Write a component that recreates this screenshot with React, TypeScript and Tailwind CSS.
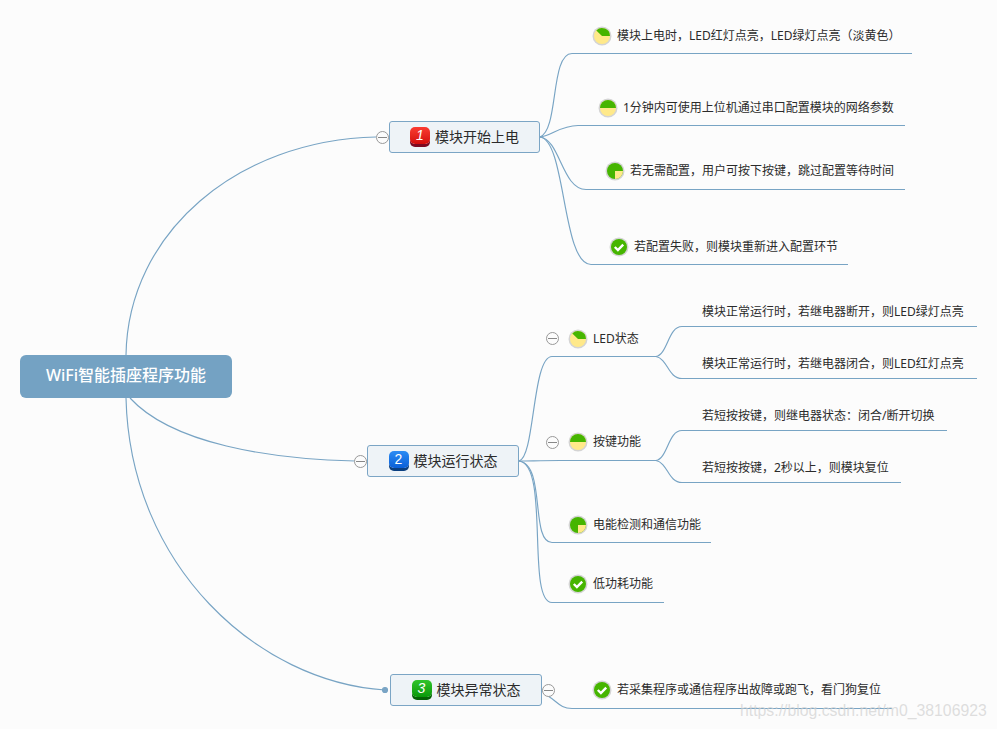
const font = "[font-family:'Noto_Sans','Noto_Sans_CJK_SC','Liberation_Sans',sans-serif]";

// connector lines of the map, drawn on one layer under the nodes
const lines = [
  "M126 355 C128 232 238 140 376 137",
  "M130 398 C172 444 270 459 355 461",
  "M126 398 C130 566 258 682 385 690",
  "M540 137 C559 130 550 53.5 572 53.5 L912 53.5",
  "M540 137 C552 136 560 125.5 578 125.5 L905 125.5",
  "M540 137 C560 139 562 189.5 586 189.5 L905 189.5",
  "M540 137 C566 140 562 264.5 591 264.5 L848 264.5",
  "M519 461 C535 458 532 356.5 552 356.5 L656 356.5",
  "M519 461 C530 461 540 460.5 560 460.5 L656 460.5",
  "M519 461 C546 464 530 542.5 552 542.5 L711 542.5",
  "M519 461 C550 464 526 602.5 552 602.5 L664 602.5",
  "M656 356.5 C668 354 668 326.5 682 326.5 L977 326.5",
  "M656 356.5 C668 359 668 378.5 682 378.5 L977 378.5",
  "M656 460.5 C668 458 668 430.5 682 430.5 L947 430.5",
  "M656 460.5 C668 463 668 482.5 682 482.5 L901 482.5",
  "M548 696 C558 702 560 708.5 572 708.5 L892 708.5",
];

function Pie({ kind }: { kind: "three" | "half" | "most" | "done" }) {
  return (
    <svg width="20" height="20" viewBox="0 0 20 20">
      <circle cx="10" cy="10" r="9.5" fill="#d4d4d4" />
      <circle cx="10" cy="10" r="8" fill={kind === "three" || kind === "half" ? "#ffe98a" : "#46b500"} />
      {kind === "three" && <path d="M10 10 L18 10 A8 8 0 0 0 4.3 4.4 Z" fill="#46b500" />}
      {kind === "half" && <path d="M2 10 A8 8 0 0 1 18 10 Z" fill="#46b500" />}
      {kind === "most" && <path d="M10 10 L18 10 A8 8 0 0 1 10 18 Z" fill="#ffe98a" />}
      {kind === "done" && <path d="M5.8 10 L8.9 13 L14.2 7.6" fill="none" stroke="#fff" strokeWidth="2.4" />}
    </svg>
  );
}

function Badge({ n }: { n: number }) {
  const colors = n === 1 ? "from-[#fb3a30] to-[#d30a0a] shadow-[0_3px_0_#7d0a22] italic" : n === 2 ? "from-[#2c8cf4] to-[#0a5fd8] shadow-[0_3px_0_#0a3f80]" : "from-[#2fc42a] to-[#079a07] shadow-[0_3px_0_#056305] italic";
  return (
    <div className={`mb-[3px] flex h-[17px] w-5 items-center justify-center rounded-[5px] bg-gradient-to-b text-[14px] text-white ${colors} [font-family:'Liberation_Sans',sans-serif]`}>
      {n}
    </div>
  );
}

function Collapse({ pos }: { pos: string }) {
  return (
    <div className={`absolute flex h-[13px] w-[13px] items-center justify-center rounded-full border border-[#999] bg-[#fcfcfc] ${pos}`}>
      <div className="h-px w-[9px] bg-[#888]" />
    </div>
  );
}

function Topic({ n, text, pos }: { n: number; text: string; pos: string }) {
  return (
    <div className={`absolute flex h-[32px] items-center justify-center gap-[5px] rounded-[3px] border border-[#7ba5c5] bg-[#eef3f7] text-[14px] text-[#2b2b2b] ${pos}`}>
      <Badge n={n} />
      <span className="pb-[2px]">{text}</span>
    </div>
  );
}

function Leaf({ icon, text, pos }: { icon?: "three" | "half" | "most" | "done"; text: string; pos: string }) {
  return (
    <div className={`absolute flex h-5 items-center gap-[5px] whitespace-nowrap text-[12px] text-[#2b2b2b] ${pos}`}>
      {icon && <Pie kind={icon} />}
      <span>{text}</span>
    </div>
  );
}

export default function App() {
  return (
    <div className={`relative h-[729px] w-[997px] overflow-hidden bg-[#fcfcfc] ${font}`}>
      <svg className="absolute inset-0" width="997" height="729" fill="none" stroke="#78a4c4" strokeWidth="1.15">
        {lines.map((d) => (
          <path key={d} d={d} />
        ))}
        <circle cx="385" cy="690" r="2.5" fill="#7ba5c5" />
      </svg>

      <div className="absolute left-[20px] top-[355px] flex h-[43px] w-[212px] items-center justify-center rounded-[6px] bg-[#74a2c3] pb-[4px] text-[16px] font-medium text-white">
        WiFi智能插座程序功能
      </div>

      <Topic n={1} text="模块开始上电" pos="left-[389px] top-[121px] w-[151px]" />
      <Topic n={2} text="模块运行状态" pos="left-[367px] top-[445px] w-[152px]" />
      <Topic n={3} text="模块异常状态" pos="left-[390px] top-[674px] w-[152px]" />

      <Collapse pos="left-[376px] top-[131px]" />
      <Collapse pos="left-[354px] top-[455px]" />
      <Collapse pos="left-[542px] top-[684px]" />
      <Collapse pos="left-[546px] top-[332px]" />
      <Collapse pos="left-[546px] top-[436px]" />

      <Leaf icon="three" text="模块上电时，LED红灯点亮，LED绿灯点亮（淡黄色）" pos="left-[592px] top-[26px]" />
      <Leaf icon="half" text="1分钟内可使用上位机通过串口配置模块的网络参数" pos="left-[598px] top-[98px]" />
      <Leaf icon="most" text="若无需配置，用户可按下按键，跳过配置等待时间" pos="left-[605px] top-[161px]" />
      <Leaf icon="done" text="若配置失败，则模块重新进入配置环节" pos="left-[609px] top-[237px]" />

      <Leaf icon="three" text="LED状态" pos="left-[568px] top-[329px]" />
      <Leaf icon="half" text="按键功能" pos="left-[568px] top-[432px]" />
      <Leaf icon="most" text="电能检测和通信功能" pos="left-[568px] top-[515px]" />
      <Leaf icon="done" text="低功耗功能" pos="left-[568px] top-[574px]" />

      <Leaf text="模块正常运行时，若继电器断开，则LED绿灯点亮" pos="left-[702px] top-[302px]" />
      <Leaf text="模块正常运行时，若继电器闭合，则LED红灯点亮" pos="left-[702px] top-[354px]" />
      <Leaf text="若短按按键，则继电器状态：闭合/断开切换" pos="left-[702px] top-[406px]" />
      <Leaf text="若短按按键，2秒以上，则模块复位" pos="left-[702px] top-[458px]" />

      <Leaf icon="done" text="若采集程序或通信程序出故障或跑飞，看门狗复位" pos="left-[592px] top-[680px]" />

      <div className="absolute left-[740px] top-[701px] text-[15.8px] leading-5 text-[#d0d0d0]/70 [font-family:'Liberation_Sans',sans-serif]">
        https://blog.csdn.net/m0_38106923
      </div>
    </div>
  );
}
